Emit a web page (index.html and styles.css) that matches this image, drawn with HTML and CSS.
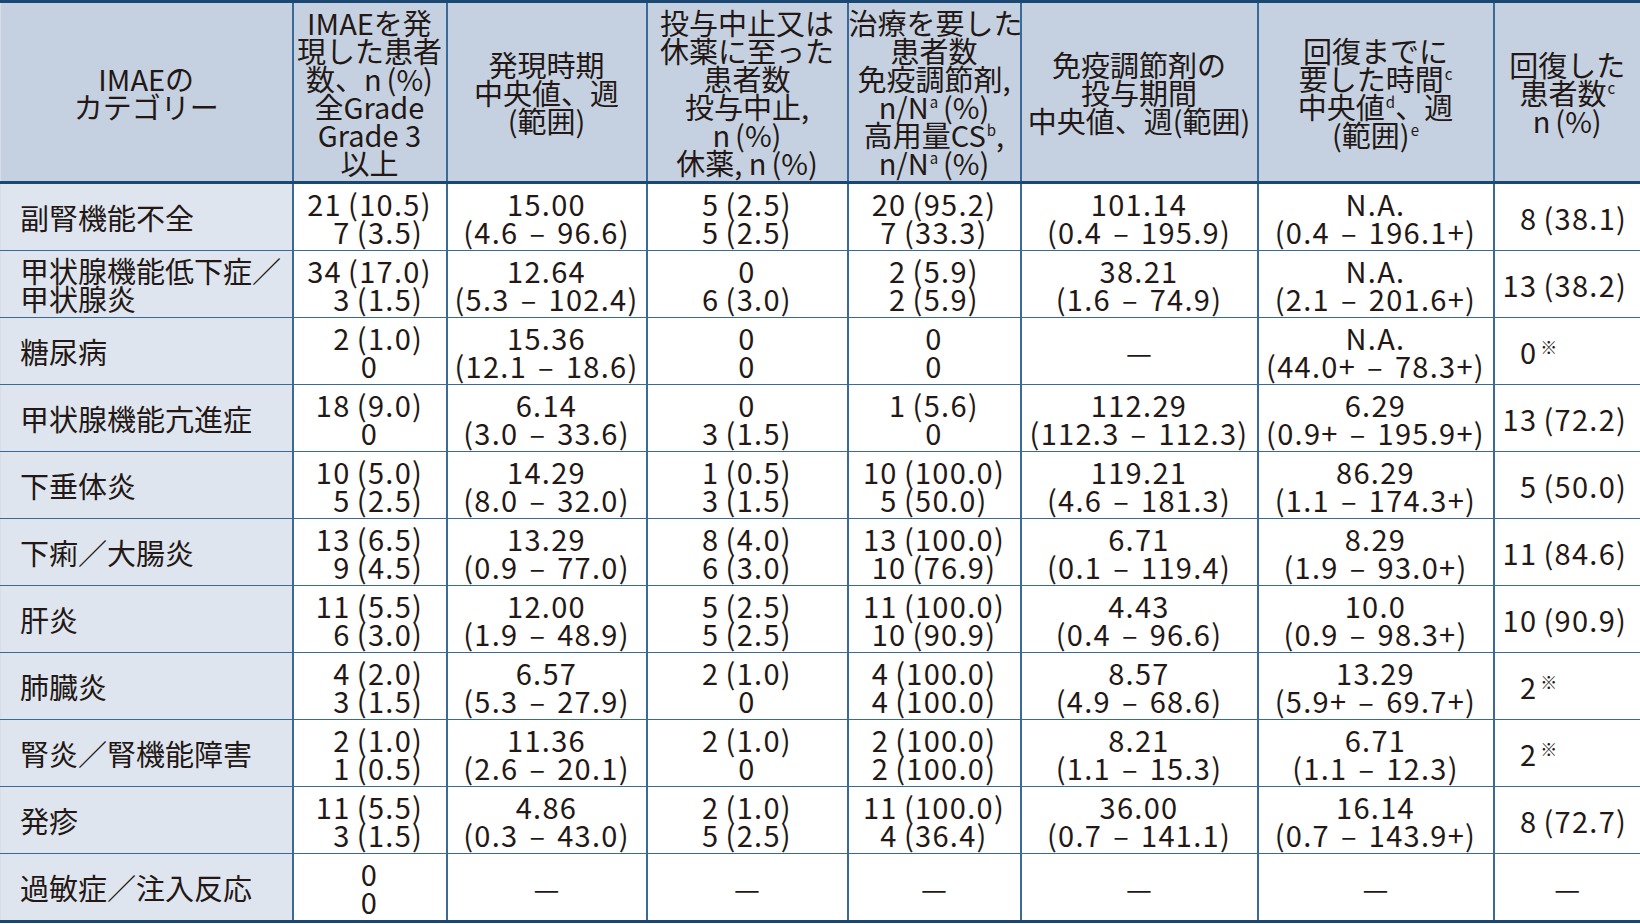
FILE: index.html
```html
<!DOCTYPE html>
<html lang="ja">
<head>
<meta charset="utf-8">
<title>IMAE</title>
<link rel="stylesheet" href="styles.css">
</head>
<body>
<table class="ae">
<colgroup>
<col class="c1"><col class="c2"><col class="c3"><col class="c4"><col class="c5"><col class="c6"><col class="c7"><col class="c8">
</colgroup>
<thead>
<tr>
<th>IMAEの<br>カテゴリー</th>
<th>IMAEを発<br>現した患者<br>数、n&#8198;(%)<br>全Grade<br>Grade 3<br>以上</th>
<th>発現時期<br>中央値、週<br>(範囲)</th>
<th>投与中止又は<br>休薬に至った<br>患者数<br>投与中止,<br>n&#8198;(%)<br>休薬, n&#8198;(%)</th>
<th>治療を要した<br>患者数<br>免疫調節剤,<br>n/N<span class="sup">a</span>&#8198;(%)<br>高用量CS<span class="sup">b</span>,<br>n/N<span class="sup">a</span>&#8198;(%)</th>
<th>免疫調節剤の<br>投与期間<br>中央値、週(範囲)</th>
<th>回復までに<br>要した時間<span class="sup">c</span><br>中央値<span class="sup">d</span>、週<br>(範囲)<span class="sup">e</span></th>
<th class="h8">回復した<br>患者数<span class="sup">c</span><br>n&#8198;(%)</th>
</tr>
</thead>
<tbody>
<tr>
<td class="cat">副腎機能不全</td>
<td>21&#8198;(10.5)<br>&#8199;7&#8198;(3.5)</td>
<td>15.00<br>(4.6&#8196;–&#8196;96.6)</td>
<td>5&#8198;(2.5)<br>5&#8198;(2.5)</td>
<td>20&#8198;(95.2)<br>7&#8198;(33.3)</td>
<td>101.14<br>(0.4&#8196;–&#8196;195.9)</td>
<td>N.A.<br>(0.4&#8196;–&#8196;196.1+)</td>
<td class="rec">&#8199;8&#8198;(38.1)</td>
</tr>
<tr>
<td class="cat">甲状腺機能低下症／<br>甲状腺炎</td>
<td>34&#8198;(17.0)<br>&#8199;3&#8198;(1.5)</td>
<td>12.64<br>(5.3&#8196;–&#8196;102.4)</td>
<td>0<br>6&#8198;(3.0)</td>
<td>2&#8198;(5.9)<br>2&#8198;(5.9)</td>
<td>38.21<br>(1.6&#8196;–&#8196;74.9)</td>
<td>N.A.<br>(2.1&#8196;–&#8196;201.6+)</td>
<td class="rec">13&#8198;(38.2)</td>
</tr>
<tr>
<td class="cat">糖尿病</td>
<td>&#8199;2&#8198;(1.0)<br>0</td>
<td>15.36<br>(12.1&#8196;–&#8196;18.6)</td>
<td>0<br>0</td>
<td>0<br>0</td>
<td class="dash">—</td>
<td>N.A.<br>(44.0+&#8196;–&#8196;78.3+)</td>
<td class="rec">&#8199;0<span class="kome">※</span></td>
</tr>
<tr>
<td class="cat">甲状腺機能亢進症</td>
<td>18&#8198;(9.0)<br>0</td>
<td>6.14<br>(3.0&#8196;–&#8196;33.6)</td>
<td>0<br>3&#8198;(1.5)</td>
<td>1&#8198;(5.6)<br>0</td>
<td>112.29<br>(112.3&#8196;–&#8196;112.3)</td>
<td>6.29<br>(0.9+&#8196;–&#8196;195.9+)</td>
<td class="rec">13&#8198;(72.2)</td>
</tr>
<tr>
<td class="cat">下垂体炎</td>
<td>10&#8198;(5.0)<br>&#8199;5&#8198;(2.5)</td>
<td>14.29<br>(8.0&#8196;–&#8196;32.0)</td>
<td>1&#8198;(0.5)<br>3&#8198;(1.5)</td>
<td>10&#8198;(100.0)<br>5&#8198;(50.0)</td>
<td>119.21<br>(4.6&#8196;–&#8196;181.3)</td>
<td>86.29<br>(1.1&#8196;–&#8196;174.3+)</td>
<td class="rec">&#8199;5&#8198;(50.0)</td>
</tr>
<tr>
<td class="cat">下痢／大腸炎</td>
<td>13&#8198;(6.5)<br>&#8199;9&#8198;(4.5)</td>
<td>13.29<br>(0.9&#8196;–&#8196;77.0)</td>
<td>8&#8198;(4.0)<br>6&#8198;(3.0)</td>
<td>13&#8198;(100.0)<br>10&#8198;(76.9)</td>
<td>6.71<br>(0.1&#8196;–&#8196;119.4)</td>
<td>8.29<br>(1.9&#8196;–&#8196;93.0+)</td>
<td class="rec">11&#8198;(84.6)</td>
</tr>
<tr>
<td class="cat">肝炎</td>
<td>11&#8198;(5.5)<br>&#8199;6&#8198;(3.0)</td>
<td>12.00<br>(1.9&#8196;–&#8196;48.9)</td>
<td>5&#8198;(2.5)<br>5&#8198;(2.5)</td>
<td>11&#8198;(100.0)<br>10&#8198;(90.9)</td>
<td>4.43<br>(0.4&#8196;–&#8196;96.6)</td>
<td>10.0<br>(0.9&#8196;–&#8196;98.3+)</td>
<td class="rec">10&#8198;(90.9)</td>
</tr>
<tr>
<td class="cat">肺臓炎</td>
<td>&#8199;4&#8198;(2.0)<br>&#8199;3&#8198;(1.5)</td>
<td>6.57<br>(5.3&#8196;–&#8196;27.9)</td>
<td>2&#8198;(1.0)<br>0</td>
<td>4&#8198;(100.0)<br>4&#8198;(100.0)</td>
<td>8.57<br>(4.9&#8196;–&#8196;68.6)</td>
<td>13.29<br>(5.9+&#8196;–&#8196;69.7+)</td>
<td class="rec">&#8199;2<span class="kome">※</span></td>
</tr>
<tr>
<td class="cat">腎炎／腎機能障害</td>
<td>&#8199;2&#8198;(1.0)<br>&#8199;1&#8198;(0.5)</td>
<td>11.36<br>(2.6&#8196;–&#8196;20.1)</td>
<td>2&#8198;(1.0)<br>0</td>
<td>2&#8198;(100.0)<br>2&#8198;(100.0)</td>
<td>8.21<br>(1.1&#8196;–&#8196;15.3)</td>
<td>6.71<br>(1.1&#8196;–&#8196;12.3)</td>
<td class="rec">&#8199;2<span class="kome">※</span></td>
</tr>
<tr>
<td class="cat">発疹</td>
<td>11&#8198;(5.5)<br>&#8199;3&#8198;(1.5)</td>
<td>4.86<br>(0.3&#8196;–&#8196;43.0)</td>
<td>2&#8198;(1.0)<br>5&#8198;(2.5)</td>
<td>11&#8198;(100.0)<br>4&#8198;(36.4)</td>
<td>36.00<br>(0.7&#8196;–&#8196;141.1)</td>
<td>16.14<br>(0.7&#8196;–&#8196;143.9+)</td>
<td class="rec">&#8199;8&#8198;(72.7)</td>
</tr>
<tr>
<td class="cat">過敏症／注入反応</td>
<td>0<br>0</td>
<td class="dash">—</td>
<td class="dash">—</td>
<td class="dash">—</td>
<td class="dash">—</td>
<td class="dash">—</td>
<td class="dash">—</td>
</tr>
</tbody>
</table>
</body>
</html>
```
FILE: styles.css
```css
html, body {
  margin: 0;
  padding: 0;
  background: #ffffff;
}
body {
  font-family: "Noto Sans CJK JP", "Noto Sans", sans-serif;
  color: #231815;
}
.ae {
  border-collapse: collapse;
  table-layout: fixed;
  width: 1640px;
}
.c1 { width: 292px; }
.c2 { width: 154px; }
.c3 { width: 200px; }
.c4 { width: 201px; }
.c5 { width: 173px; }
.c6 { width: 237px; }
.c7 { width: 236px; }
.c8 { width: 147px; }

.ae th,
.ae td {
  font-weight: 400;
  font-size: 29px;
  line-height: 28px;
  text-align: center;
  vertical-align: middle;
  padding: 0;
  border-left: 2px solid #3a6a97;
  border-right: 2px solid #3a6a97;
  border-bottom: 1px solid #3a6a97;
  white-space: nowrap;
}
.ae td {
  letter-spacing: 1.3px;
}
.ae th:first-child,
.ae td:first-child {
  border-left: 1px solid #d8dee8;
}
.ae th:last-child,
.ae td:last-child {
  border-right: 1px solid #d8dee8;
}
.ae thead th {
  background: #c5d1e0;
  border-top: 3px solid #1b4872;
  border-bottom: 3px solid #1b4872;
  height: 178px;
}
.ae tbody td {
  height: 66px;
}
.ae tbody tr:last-child td {
  border-bottom: 3px solid #1b4872;
}
.ae td.cat {
  text-align: left;
  padding-left: 19px;
  background: #dfe5ee;
  letter-spacing: 0;
}
.ae td.rec {
  text-align: left;
  padding-left: 8px;
}
.ae td.dash {
  text-align: center;
  letter-spacing: 0;
}
.sup {
  font-size: 15px;
  line-height: 0;
  vertical-align: 11px;
  margin-left: 1px;
}
.kome {
  font-size: 17px;
  line-height: 0;
  vertical-align: 10px;
  margin-left: 3px;
}
```
